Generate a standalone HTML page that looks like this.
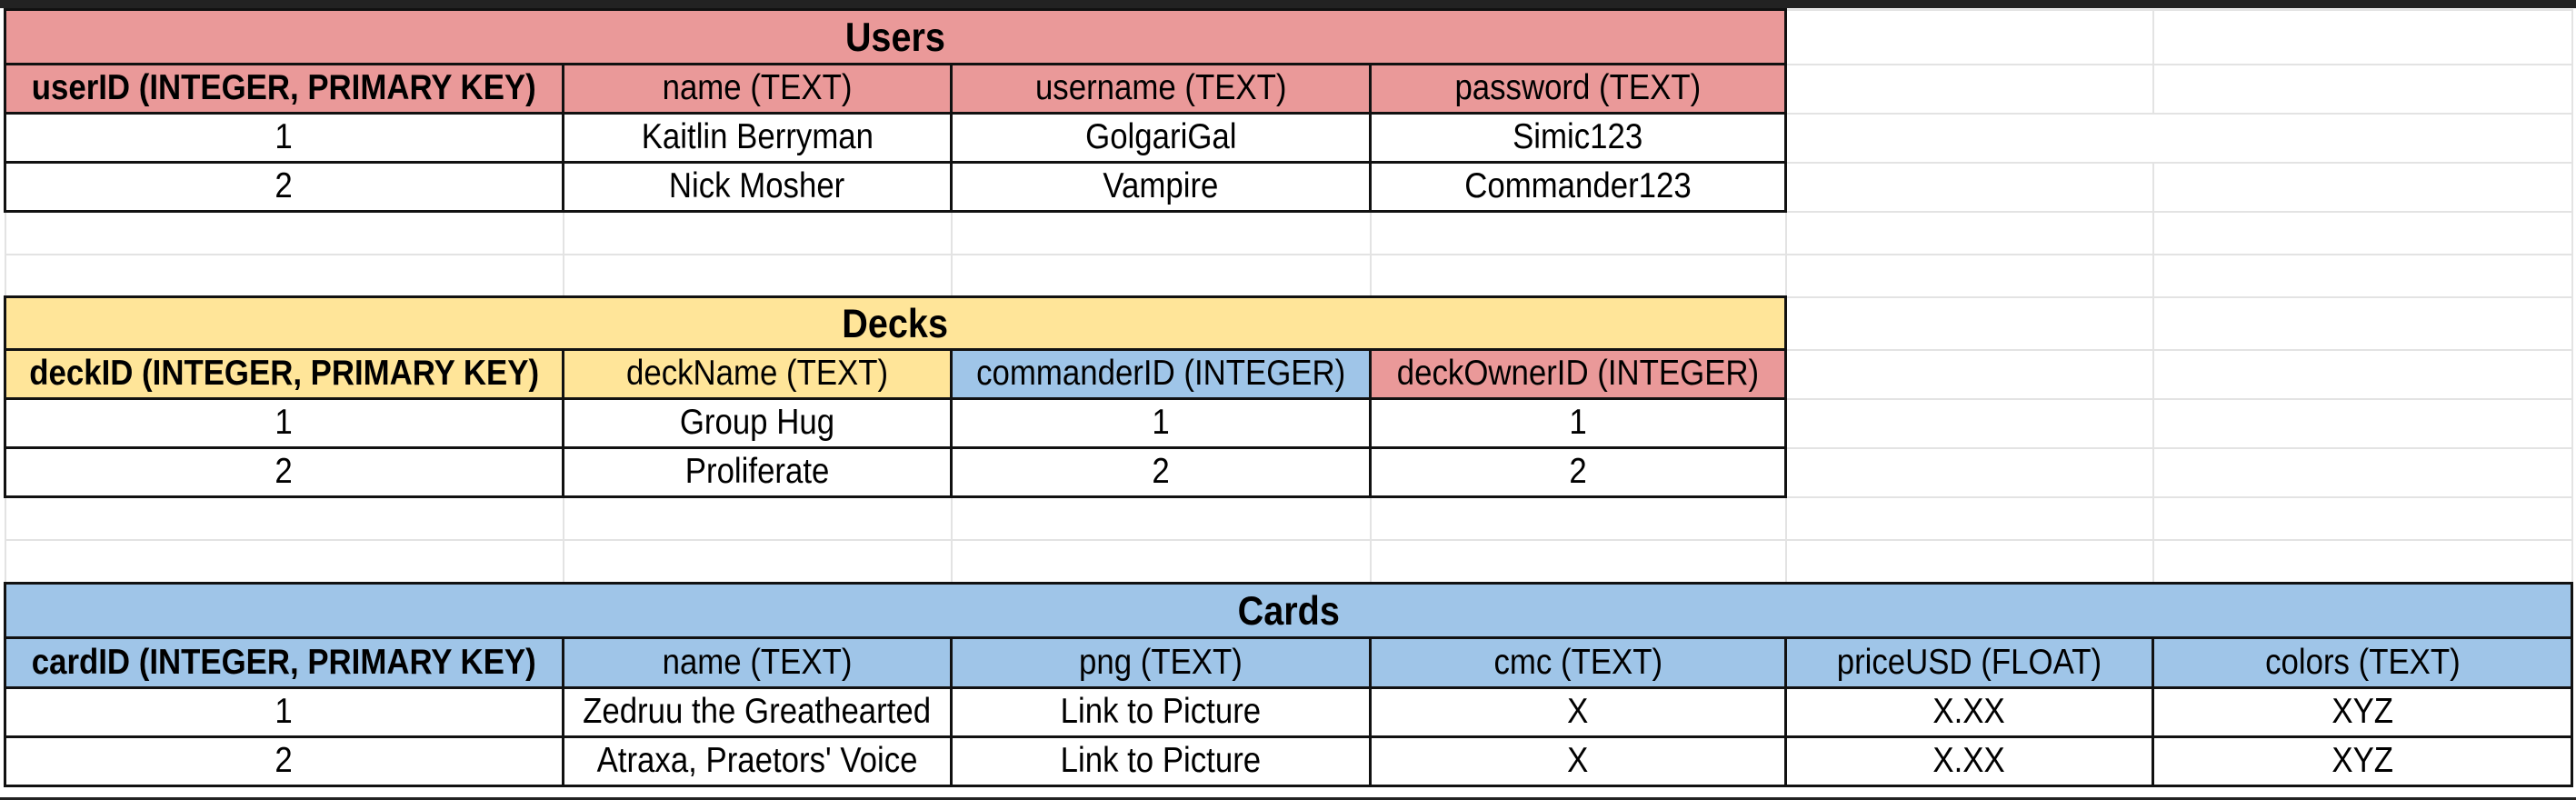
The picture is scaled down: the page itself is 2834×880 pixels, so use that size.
<!DOCTYPE html>
<html><head><meta charset="utf-8"><style>
html,body{margin:0;padding:0;width:2834px;height:880px;overflow:hidden;background:#fff;font-family:"Liberation Sans",Arial,sans-serif}
.top{position:absolute;left:0;top:0;width:2834px;height:9px;background:#222}
.bot{position:absolute;left:0;top:877px;width:2834px;height:3px;background:#222}
table{position:absolute;left:4px;top:9px;border-collapse:collapse;table-layout:fixed}
td{border:2px solid #e3e3e3;padding:0;text-align:center;font-size:29px;color:#000;overflow:hidden;white-space:nowrap}
td.t{border:3px solid #111}
td span{display:inline-block;transform:scale(1.2,1.35)}
.b{font-weight:bold}
.ti{font-weight:bold;font-size:33px}
.p{background:#ea9999}.y{background:#ffe599}.c{background:#9fc5e8}
</style></head><body>
<div class="top"></div>
<table>
<colgroup><col style="width:614px"><col style="width:427px"><col style="width:461px"><col style="width:457px"><col style="width:404px"><col style="width:461px"></colgroup>
<tr style="height:60px"><td class="t p ti" colspan="4"><span>Users</span></td><td></td><td></td></tr>
<tr style="height:54px"><td class="t p b"><span>userID (INTEGER, PRIMARY KEY)</span></td><td class="t p"><span>name (TEXT)</span></td><td class="t p"><span>username (TEXT)</span></td><td class="t p"><span>password (TEXT)</span></td><td></td><td></td></tr>
<tr style="height:54px"><td class="t"><span>1</span></td><td class="t"><span>Kaitlin Berryman</span></td><td class="t"><span>GolgariGal</span></td><td class="t"><span>Simic123</span></td><td colspan="2"></td></tr>
<tr style="height:54px"><td class="t"><span>2</span></td><td class="t"><span>Nick Mosher</span></td><td class="t"><span>Vampire</span></td><td class="t"><span>Commander123</span></td><td></td><td></td></tr>
<tr style="height:47px"><td></td><td></td><td></td><td></td><td></td><td></td></tr>
<tr style="height:47px"><td></td><td></td><td></td><td></td><td></td><td></td></tr>
<tr style="height:58px"><td class="t y ti" colspan="4"><span>Decks</span></td><td></td><td></td></tr>
<tr style="height:54px"><td class="t y b"><span>deckID (INTEGER, PRIMARY KEY)</span></td><td class="t y"><span>deckName (TEXT)</span></td><td class="t c"><span>commanderID (INTEGER)</span></td><td class="t p"><span>deckOwnerID (INTEGER)</span></td><td></td><td></td></tr>
<tr style="height:54px"><td class="t"><span>1</span></td><td class="t"><span>Group Hug</span></td><td class="t"><span>1</span></td><td class="t"><span>1</span></td><td></td><td></td></tr>
<tr style="height:54px"><td class="t"><span>2</span></td><td class="t"><span>Proliferate</span></td><td class="t"><span>2</span></td><td class="t"><span>2</span></td><td></td><td></td></tr>
<tr style="height:47px"><td></td><td></td><td></td><td></td><td></td><td></td></tr>
<tr style="height:48px"><td></td><td></td><td></td><td></td><td></td><td></td></tr>
<tr style="height:60px"><td class="t c ti" colspan="6"><span>Cards</span></td></tr>
<tr style="height:55px"><td class="t c b"><span>cardID (INTEGER, PRIMARY KEY)</span></td><td class="t c"><span>name (TEXT)</span></td><td class="t c"><span>png (TEXT)</span></td><td class="t c"><span>cmc (TEXT)</span></td><td class="t c"><span>priceUSD (FLOAT)</span></td><td class="t c"><span>colors (TEXT)</span></td></tr>
<tr style="height:54px"><td class="t"><span>1</span></td><td class="t"><span>Zedruu the Greathearted</span></td><td class="t"><span>Link to Picture</span></td><td class="t"><span>X</span></td><td class="t"><span>X.XX</span></td><td class="t"><span>XYZ</span></td></tr>
<tr style="height:54px"><td class="t"><span>2</span></td><td class="t"><span>Atraxa, Praetors' Voice</span></td><td class="t"><span>Link to Picture</span></td><td class="t"><span>X</span></td><td class="t"><span>X.XX</span></td><td class="t"><span>XYZ</span></td></tr>
</table>
<div class="bot"></div>
</body></html>
